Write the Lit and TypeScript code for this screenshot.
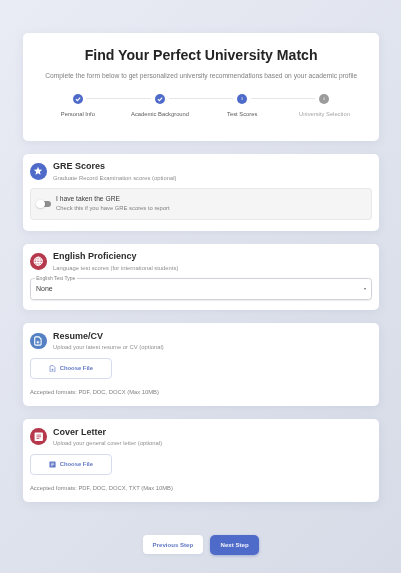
import { LitElement, html, css, svg } from "lit";
import { customElement } from "lit/decorators.js";

const check = svg`<path d="M2.9 5.1 4.4 6.6 7.2 3.6" fill="none" stroke="#fff" stroke-width="1.1"/>`;
const fileIcon = (c: string, w = 1) => svg`<path d="M2.5 1h3.6L8.5 3.4V9a1 1 0 0 1-1 1h-5a1 1 0 0 1-1-1V2a1 1 0 0 1 1-1Z" fill="none" stroke="${c}" stroke-width="${w}"/><path d="M3.4 6.8h3.2M5 5.2v3.2" stroke="${c}" stroke-width="${w * 0.85}"/>`;
const docIcon = (bg: string, fg: string) => svg`<rect x=".6" y=".6" width="8.8" height="8.8" rx="1" fill="${bg}"/><path d="M2.6 3.2h4.8M2.6 5h4.8M2.6 6.8h3" stroke="${fg}" stroke-width=".8"/>`;

@customElement("app-root")
export class AppRoot extends LitElement {
  static styles = css`
    :host { display: block; min-height: 573px; box-sizing: border-box; padding: 33.3px 22px 18px 23.3px;
      background: linear-gradient(135deg, #e9ecf4 0%, #d6dbe7 100%);
      font-family: "Liberation Sans", Arial, sans-serif; color: #333; filter: blur(.4px); }
    .stack { display: flex; flex-direction: column; gap: 13px; }
    .card { background: #fff; border-radius: 5px; box-shadow: 0 2px 10px rgba(90,100,140,.1); box-sizing: border-box; }
    .hero { height: 107.4px; padding: 13.9px 13.5px 0; text-align: center; }
    h1 { margin: 0; font-size: 14.1px; line-height: 17px; font-weight: 700; color: #242424; }
    .lead { margin: 7px 0 0; font-size: 6.68px; line-height: 9px; color: #808080; white-space: nowrap; }
    .steps { display: grid; grid-template-columns: repeat(4, 1fr); margin-top: 13.5px; }
    .step { position: relative; display: flex; flex-direction: column; align-items: center; gap: 7.1px; }
    .line { position: absolute; top: 4.5px; left: calc(50% + 8.5px); width: calc(100% - 18px); height: 1px; background: #e6e6ea; }
    .dot { width: 10px; height: 10px; border-radius: 50%; background: #4f6bc9; display: block; }
    .dot text { font: 3.5px "Liberation Sans", sans-serif; fill: #dfe5fa; }
    .gray { background: #9b9b9b; }
    .step span { font-size: 5.8px; line-height: 7px; color: #5a5a5a; white-space: nowrap; }
    .step .off { color: #a4a4a4; }
    .sec { padding: 7.5px 7px 0 6.7px; }
    .head { display: grid; grid-template-columns: 16.7px 1fr; column-gap: 6.3px; align-items: start; }
    .ic { width: 16.7px; height: 16.7px; border-radius: 50%; display: flex; align-items: center; justify-content: center; margin-top: 1.8px; }
    .blue { background: #4f6bc9; } .steel { background: #5480c4; } .red { background: #b5384c; }
    h2 { margin: 0; font-size: 9px; line-height: 11px; font-weight: 700; color: #2c2c2c; }
    .head p { margin: 2.4px 0 0; font-size: 5.85px; line-height: 7px; color: #909090; white-space: nowrap; }
    .gre { height: 77px; }
    .toggle { margin-top: 6.4px; height: 32px; background: #f5f5f6; border: 0.5px solid #e8e8ec; border-radius: 3.5px; box-sizing: border-box; display: flex; align-items: center; padding: 0 6px; gap: 5px; }
    .sw { position: relative; width: 14px; height: 6px; border-radius: 3px; background: #8e8e8e; flex: none; }
    .knob { position: absolute; left: -.5px; top: -1.3px; width: 8.4px; height: 8.4px; border-radius: 50%; background: #fff; box-shadow: 0 .5px 1.5px rgba(0,0,0,.25); }
    .tt { font-size: 6.7px; line-height: 8px; color: #3a3a3a; }
    .ts { font-size: 5.85px; line-height: 7px; color: #808080; margin-top: 2px; }
    .eng { height: 66.7px; }
    .field { position: relative; margin-top: 6.1px; height: 22.6px; border: .6px solid #d2d2d8; border-radius: 3.5px; box-sizing: border-box; display: flex; align-items: center; justify-content: space-between; padding: 0 5px; font-size: 7px; color: #3a3a3a; box-shadow: 0 .5px 1.5px rgba(0,0,0,.08); }
    .legend { position: absolute; left: 3.8px; top: -3px; background: #fff; padding: 0 1.5px; font-size: 5px; line-height: 5px; color: #808080; white-space: nowrap; }
    .caret { width: 0; height: 0; border: 1.5px solid transparent; border-top: 2px solid #666; border-bottom: 0; }
    .up { height: 82.8px; }
    .file { margin-top: 6.5px; width: 81.7px; height: 21px; border: .7px solid #d6dbee; border-radius: 4px; box-sizing: border-box; display: flex; align-items: center; justify-content: center; gap: 4px; background: #fff; font-size: 5.9px; font-weight: 700; color: #6278c6; }
    .fmt { margin: 10.5px 0 0; font-size: 5.82px; line-height: 7px; color: #808080; white-space: nowrap; }
    .nav { display: flex; justify-content: center; gap: 7px; margin: 32.7px 0 0; align-items: center; }
    .btn { display: flex; align-items: center; justify-content: center; box-sizing: border-box; font-size: 6.1px; font-weight: 700; border-radius: 4px; }
    .prev { width: 60px; height: 18.7px; background: #fff; color: #6278c6; box-shadow: 0 1px 3px rgba(90,100,140,.1); }
    .next { width: 49.5px; height: 20px; border-radius: 5px; background: #4f6bc9; color: #eef1fb; box-shadow: 0 1px 3px rgba(60,80,160,.35); }
  `;

  private sec(cls: string, color: string, icon: unknown, title: string, sub: string, body: unknown) {
    return html`<section class="card sec ${cls}">
      <div class="head">
        <div class="ic ${color}">${icon}</div>
        <div><h2>${title}</h2><p>${sub}</p></div>
      </div>
      ${body}
    </section>`;
  }

  private upload(icon: unknown, fmt: string) {
    return html`<div class="file"><svg width="7" height="7" viewBox="0 0 10 10">${icon}</svg>Choose File</div><p class="fmt">${fmt}</p>`;
  }

  render() {
    return html`<div class="stack">
      <section class="card hero">
        <h1>Find Your Perfect University Match</h1>
        <p class="lead">Complete the form below to get personalized university recommendations based on your academic profile</p>
        <div class="steps">
          <div class="step"><svg class="dot" viewBox="0 0 10 10">${check}</svg><i class="line"></i><span>Personal Info</span></div>
          <div class="step"><svg class="dot" viewBox="0 0 10 10">${check}</svg><i class="line"></i><span>Academic Background</span></div>
          <div class="step"><svg class="dot" viewBox="0 0 10 10"><text x="5" y="6.2" text-anchor="middle">3</text></svg><i class="line"></i><span>Test Scores</span></div>
          <div class="step"><svg class="dot gray" viewBox="0 0 10 10"><text x="5" y="6.2" text-anchor="middle" style="fill:#eee">4</text></svg><span class="off">University Selection</span></div>
        </div>
      </section>

      ${this.sec("gre", "blue", html`<svg width="10" height="10" viewBox="0 0 24 24"><path fill="#fff" d="M12 17.27 18.18 21l-1.64-7.03L22 9.24l-7.19-.61L12 2 9.19 8.63 2 9.24l5.46 4.73L5.82 21z"/></svg>`,
        "GRE Scores", "Graduate Record Examination scores (optional)",
        html`<div class="toggle"><div class="sw"><div class="knob"></div></div><div><div class="tt">I have taken the GRE</div><div class="ts">Check this if you have GRE scores to report</div></div></div>`)}

      ${this.sec("eng", "red", html`<svg width="10.5" height="10.5" viewBox="0 0 24 24" fill="rgba(255,255,255,.35)" stroke="#fff" stroke-width="2.2"><circle cx="12" cy="12" r="9.5"/><ellipse cx="12" cy="12" rx="4" ry="9.5"/><path d="M3 9h18M3 15h18"/></svg>`,
        "English Proficiency", "Language test scores (for international students)",
        html`<div class="field"><span class="legend">English Test Type</span>None<i class="caret"></i></div>`)}

      ${this.sec("up", "steel", html`<svg width="10" height="10" viewBox="0 0 10.2 11">${fileIcon("#fff", 1.2)}</svg>`,
        "Resume/CV", "Upload your latest resume or CV (optional)",
        this.upload(fileIcon("#6278c6"), "Accepted formats: PDF, DOC, DOCX (Max 10MB)"))}

      ${this.sec("up", "red", html`<svg width="9.5" height="9.5" viewBox="0 0 10 10">${docIcon("#fff", "#b5384c")}</svg>`,
        "Cover Letter", "Upload your general cover letter (optional)",
        this.upload(docIcon("#6278c6", "#fff"), "Accepted formats: PDF, DOC, DOCX, TXT (Max 10MB)"))}
    </div>
    <div class="nav"><div class="btn prev">Previous Step</div><div class="btn next">Next Step</div></div>`;
  }
}
